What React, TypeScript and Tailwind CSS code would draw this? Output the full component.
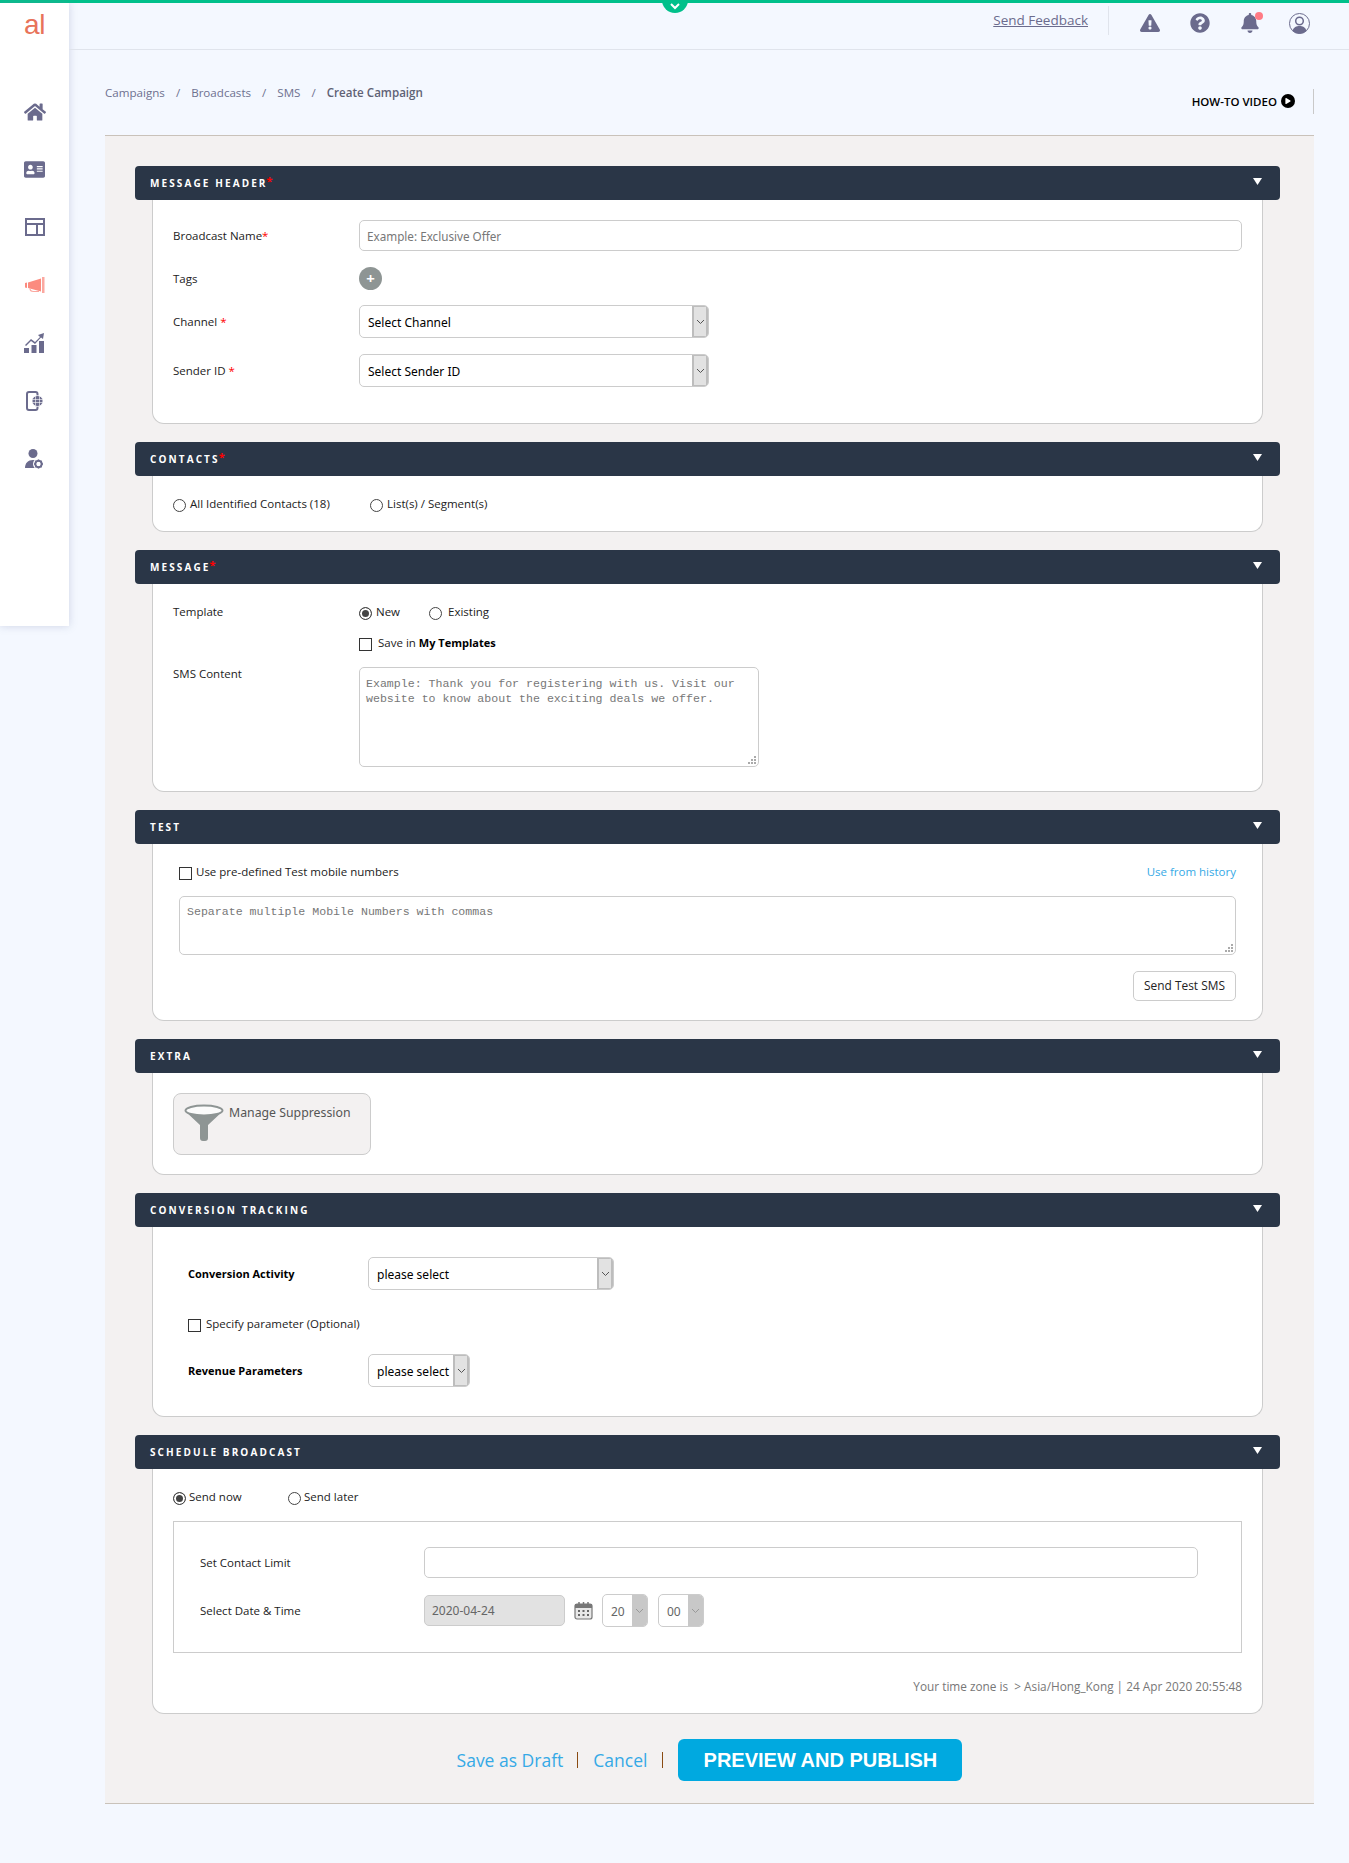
import React from 'react';
import { FaHome, FaAddressCard, FaExclamationTriangle, FaQuestionCircle, FaBell, FaPlay } from 'react-icons/fa';

const NUN = 'font-["Open_Sans","Noto_Sans",sans-serif]';
const TAH = 'font-["Noto_Sans",sans-serif]';
const MONO = "font-['Liberation_Mono',monospace]";

function Chevron({ color = '#555' }: { color?: string }) {
  return (
    <svg width="9" height="6" viewBox="0 0 9 6" fill="none">
      <path d="M1 1l3.5 3.5L8 1" stroke={color} strokeWidth="1" />
    </svg>
  );
}

function Section({ title, req, children }: { title: string; req?: boolean; children: React.ReactNode }) {
  return (
    <div className="mb-[18px]">
      <div className="h-[34px] rounded-[4px] bg-[#2a3647] flex items-center justify-between pl-[15px] pr-[18px]">
        <div className="text-[10px] font-bold tracking-[2.1px] text-white leading-none mb-[1px]">
          {title}
          {req && <span className="text-[#ff0000] text-[11px] tracking-normal relative -top-[2px] -left-[1px]">*</span>}
        </div>
        <svg width="9" height="7" viewBox="0 0 9 7" className="mb-[4px]"><path d="M0 0h9L4.500 7z" fill="#fff" /></svg>
      </div>
      <div className="mx-[17px] bg-white border-x border-b border-[#ccc] rounded-b-[12px]">{children}</div>
    </div>
  );
}

function Select({ text, w, grey }: { text: string; w: string; grey?: boolean }) {
  return (
    <div className={`${w} h-[33px] shrink-0 flex rounded-[5px] border border-[#ccc] bg-white overflow-hidden`}>
      <div className={`flex-1 pl-[8px] pt-[2px] flex items-center text-[12px] whitespace-nowrap ${TAH} ${grey ? 'text-[#666]' : 'text-black'}`}>{text}</div>
      <div className={`${grey ? 'w-[15px] bg-[#c8c8c8]' : 'w-[16px] bg-[#e2e2e2] border-x-2 border-y border-[#bdbdbd]'} flex items-center justify-center`}>
        <Chevron color={grey ? '#999' : '#555'} />
      </div>
    </div>
  );
}

function Radio({ checked, name }: { checked?: boolean; name: string }) {
  return (
    <input
      type="radio"
      name={name}
      defaultChecked={checked}
      className="appearance-none w-[13px] h-[13px] mt-[3px] shrink-0 rounded-full border border-[#444] bg-white checked:bg-[#444] checked:shadow-[inset_0_0_0_2px_#fff]"
    />
  );
}

function Check() {
  return <input type="checkbox" className="appearance-none w-[13px] h-[13px] mt-[3px] shrink-0 border border-[#333] bg-white" />;
}

function Label({ children, className = '' }: { children: React.ReactNode; className?: string }) {
  return <div className={`text-[11.5px] leading-[17px] text-[#222] ${className}`}>{children}</div>;
}

function Grip() {
  return (
    <svg width="8" height="8" viewBox="0 0 8 8" fill="#aaa" className="absolute right-[3px] bottom-[3px]">
      <path d="M6 0h2v2H6zM3 3h2v2H3zM6 3h2v2H6zM0 6h2v2H0zM3 6h2v2H3zM6 6h2v2H6z" />
    </svg>
  );
}

const Star = () => <span className="text-[#ff0000]">*</span>;

function LayoutIcon() {
  return (
    <svg width="20" height="18" viewBox="0 0 20 18" fill="#6b6b8d">
      <path fillRule="evenodd" d="M0 0h20v18H0zM2 2v3h16V2zM2 7v9h9V7zM13 7v9h5V7z" />
    </svg>
  );
}

function ChartIcon() {
  return (
    <svg width="21" height="20" viewBox="0 0 21 20" fill="#6b6b8d">
      <rect x="0" y="15" width="5" height="5" />
      <rect x="7.500" y="12" width="5" height="8" />
      <rect x="15" y="8" width="5" height="12" />
      <path d="M1 12l6-6 4 3 5-5-2-2 6-2-1 6-2-1.500-6 6.500-4-3-5 5z" />
    </svg>
  );
}

function Megaphone() {
  return (
    <svg width="20" height="16" viewBox="0 0 20 16">
      <path d="M0 6l2-.500V11L0 10.500z" fill="#fb8b7f" />
      <path d="M3 5.500L16 1.500v13L3 11z" fill="#fb8b7f" />
      <rect x="17" y="0" width="2.500" height="16" fill="#fba8a0" />
      <path d="M5 11.500c0 3 2 3 3.500 3H14" fill="none" stroke="#fba8a0" strokeWidth="1.200" />
    </svg>
  );
}

function MobileIcon() {
  return (
    <svg width="17" height="20" viewBox="0 0 17 20">
      <rect x="1" y="1" width="10.500" height="18" rx="2" fill="none" stroke="#6b6b8d" strokeWidth="2" />
      <circle cx="11.500" cy="10" r="5.500" fill="#6b6b8d" stroke="#fff" strokeWidth="0.800" />
      <path d="M6.500 8.500h10M6.500 11.500h10M9.500 5v10M13.500 5v10" stroke="#fff" strokeWidth="0.600" />
    </svg>
  );
}

function UserGear() {
  return (
    <svg width="19" height="20" viewBox="0 0 19 20">
      <circle cx="8" cy="4.500" r="4.500" fill="#6b6b8d" />
      <path d="M0 19c0-5 3-8 8-8s8 3 8 8z" fill="#6b6b8d" />
      <circle cx="13.500" cy="15" r="5.500" fill="#fff" />
      <circle cx="13.500" cy="15" r="3.200" fill="none" stroke="#6b6b8d" strokeWidth="2" />
      <path d="M13.500 10.500v2M13.500 17.500v2M9 15h2M16 15h2M10.300 11.800l1.400 1.400M15.300 16.800l1.400 1.400M16.700 11.800l-1.400 1.400M11.700 16.800l-1.400 1.400" stroke="#6b6b8d" strokeWidth="1.300" />
    </svg>
  );
}

function UserCircle() {
  return (
    <svg width="21" height="21" viewBox="0 0 21 21">
      <circle cx="10.500" cy="10.500" r="10" fill="none" stroke="#6b6b8d" strokeWidth="1" />
      <circle cx="10.500" cy="8" r="3.800" fill="none" stroke="#6b6b8d" strokeWidth="1.500" />
      <path d="M3.500 18c1-4 4-5 7-5s6 1 7 5a10 10 0 0 1-14 0z" fill="#6b6b8d" />
    </svg>
  );
}

function Funnel() {
  return (
    <svg width="40" height="37" viewBox="0 0 40 37">
      <path d="M1 7l15 14v13a3 3 0 0 0 3 3h2a3 3 0 0 0 3-3V21L39 7z" fill="#8e9594" />
      <ellipse cx="20" cy="6.500" rx="18.500" ry="5" fill="#fbfbfb" stroke="#8e9594" strokeWidth="2" />
    </svg>
  );
}

function CalendarIcon() {
  return (
    <svg width="19" height="19" viewBox="0 0 19 19" className="shrink-0">
      <rect x="1" y="3" width="17" height="15" rx="2" fill="#e8e8e8" stroke="#777" strokeWidth="1.200" />
      <rect x="1" y="3" width="17" height="4" fill="#777" />
      <path d="M5 1v4M9.500 1v4M14 1v4" stroke="#777" strokeWidth="1.500" />
      <path d="M4 9h2v2H4zM8.500 9h2v2h-2zM13 9h2v2h-2zM4 13h2v2H4zM8.500 13h2v2h-2zM13 13h2v2h-2z" fill="#666" />
    </svg>
  );
}

export default function App() {
  return (
    <div className={`min-h-[1863px] bg-[#f4f8ff] relative ${NUN}`}>
      <div className="h-[3px] bg-[#00c08b]" />
      <div className="absolute left-[662px] top-0 w-[26px] h-[13px] rounded-b-[13px] bg-[#00c08b] flex items-center justify-center">
        <svg width="10" height="7" viewBox="0 0 10 7" fill="none"><path d="M1 1l4 4 4-4" stroke="#fff" strokeWidth="2" /></svg>
      </div>
      <div className="flex items-start">
        <aside className="w-[69px] h-[623px] shrink-0 bg-white shadow-[0_0_8px_rgba(120,130,170,0.3)] flex flex-col items-center">
          <div className="h-[46px] mt-[4px] text-[28px] leading-[36px] font-['Liberation_Sans',sans-serif] tracking-[-0.5px] text-[#e8735a]">al</div>
          <div className="mt-[48px] flex flex-col items-center">
            <div className="h-[58px] flex items-start"><FaHome size={22} color="#6b6b8d" /></div>
            <div className="h-[58px] flex items-start"><FaAddressCard size={21} color="#6b6b8d" /></div>
            <div className="h-[58px] flex items-start pt-[1px]"><LayoutIcon /></div>
            <div className="h-[58px] flex items-start pt-[2px]"><Megaphone /></div>
            <div className="h-[58px] flex items-start"><ChartIcon /></div>
            <div className="h-[58px] flex items-start"><MobileIcon /></div>
            <div className="h-[58px] flex items-start"><UserGear /></div>
          </div>
        </aside>

        <main className="flex-1 min-w-0">
          <header className="h-[47px] border-b border-[#e0e4ec] flex items-center justify-end pr-[25px]">
            <a className="text-[13.5px] text-[#6b6b8d] underline mb-[12px]">Send Feedback</a>
            <div className="w-px h-[29px] bg-[#e0e4ec] ml-[20px] mr-[16px] mb-[12px]" />
            <div className="flex items-center mb-[6px]">
              <span className="w-[50px] flex justify-center"><FaExclamationTriangle size={20} color="#6b6b8d" /></span>
              <span className="w-[50px] flex justify-center"><FaQuestionCircle size={20} color="#6b6b8d" /></span>
              <span className="w-[49px] flex justify-center">
                <span className="relative">
                  <FaBell size={20} color="#6b6b8d" />
                  <span className="absolute -top-[1px] right-[-3px] w-[8px] h-[8px] rounded-full bg-[#ff7b85]" />
                </span>
              </span>
              <span className="w-[50px] flex justify-center"><UserCircle /></span>
            </div>
          </header>

          <div className="pl-[36px] pr-[35px]">
            <div className="h-[85px] relative">
              <div className="pt-[34px] text-[11.6px] text-[#6e7190] flex">
                <span>Campaigns</span><span className="mx-[11px]">/</span>
                <span>Broadcasts</span><span className="mx-[11px]">/</span>
                <span>SMS</span><span className="mx-[11px]">/</span>
                <span className="font-semibold text-[#5f6275]">Create Campaign</span>
              </div>
              <div className="absolute right-0 top-[39px] h-[25px] border-r border-[#c9c9c9] pr-[18px] flex items-center gap-[4px]">
                <span className="text-[11.5px] font-semibold text-black">HOW-TO VIDEO</span>
                <span className="w-[14px] h-[14px] rounded-full bg-black flex items-center justify-center mb-[1px]"><FaPlay size={6} color="#fff" /></span>
              </div>
            </div>

            <div className="bg-[#f3f1f1] border-y border-[#c9c2ba] pl-[30px] pr-[34px] pt-[30px] pb-[22px] w-[1209px]">
              <Section title="MESSAGE HEADER" req>
                <div className="pl-[20px] pr-[20px] pt-[20px] pb-[36px]">
                  <div className="flex items-center">
                    <Label className="w-[186px]">Broadcast Name<Star /></Label>
                    <input placeholder="Example: Exclusive Offer" className={`flex-1 h-[31px] rounded-[5px] border border-[#ccc] px-[7px] text-[11.7px] placeholder:text-[#777] ${TAH}`} />
                  </div>
                  <div className="flex items-center mt-[16px]">
                    <Label className="w-[186px]">Tags</Label>
                    <span className="w-[23px] h-[23px] rounded-full bg-[#8e9594] text-white flex items-center justify-center text-[15px] font-bold leading-none">+</span>
                  </div>
                  <div className="flex items-center mt-[15px]">
                    <Label className="w-[186px]">Channel <Star /></Label>
                    <Select text="Select Channel" w="w-[350px]" />
                  </div>
                  <div className="flex items-center mt-[16px]">
                    <Label className="w-[186px]">Sender ID <Star /></Label>
                    <Select text="Select Sender ID" w="w-[350px]" />
                  </div>
                </div>
              </Section>

              <Section title="CONTACTS" req>
                <div className="pl-[20px] h-[55px] pt-[19px] flex items-start">
                  <label className="flex items-center gap-[4px] w-[197px]"><Radio name="contacts" /><Label>All Identified Contacts (18)</Label></label>
                  <label className="flex items-center gap-[4px]"><Radio name="contacts" /><Label>List(s) / Segment(s)</Label></label>
                </div>
              </Section>

              <Section title="MESSAGE" req>
                <div className="pl-[20px] pt-[19px] h-[207px]">
                  <div className="flex items-center">
                    <Label className="w-[186px]">Template</Label>
                    <label className="flex items-center gap-[4px] w-[70px]"><Radio name="tpl" checked /><Label>New</Label></label>
                    <label className="flex items-center gap-[6px]"><Radio name="tpl" /><Label>Existing</Label></label>
                  </div>
                  <div className="flex items-center ml-[186px] mt-[14px] gap-[6px]">
                    <Check /><Label>Save in <b className="text-black text-[11px] font-bold">My Templates</b></Label>
                  </div>
                  <div className="flex mt-[16px]">
                    <Label className="w-[186px] -mt-[2px]">SMS Content</Label>
                    <div className="relative">
                      <textarea placeholder="Example: Thank you for registering with us. Visit our website to know about the exciting deals we offer." className={`block w-[400px] h-[100px] resize-none rounded-[5px] border border-[#ccc] px-[6px] py-[8px] text-[11.6px] leading-[15px] placeholder:text-[#777] ${MONO}`} />
                      <Grip />
                    </div>
                  </div>
                </div>
              </Section>

              <Section title="TEST">
                <div className="pl-[26px] pr-[26px] pt-[19px] h-[176px]">
                  <div className="flex items-center justify-between">
                    <label className="flex items-center gap-[4px]"><Check /><Label>Use pre-defined Test mobile numbers</Label></label>
                    <a className="text-[11.5px] text-[#35a9e6]">Use from history</a>
                  </div>
                  <div className="relative mt-[16px]">
                    <textarea placeholder="Separate multiple Mobile Numbers with commas" className={`block w-full h-[59px] resize-none rounded-[5px] border border-[#ccc] px-[7px] py-[8px] text-[11.6px] leading-[14px] placeholder:text-[#777] ${MONO}`} />
                    <Grip />
                  </div>
                  <div className="flex justify-end mt-[16px]">
                    <button className="h-[30px] w-[103px] rounded-[5px] border border-[#ccc] bg-white text-[11.9px] text-[#222]">Send Test SMS</button>
                  </div>
                </div>
              </Section>

              <Section title="EXTRA">
                <div className="pl-[20px] pt-[20px] h-[101px]">
                  <div className="w-[198px] h-[62px] rounded-[8px] border border-[#ccc] bg-[#f3f1f1] pl-[10px] pt-[10px] flex items-start gap-[5px]">
                    <Funnel />
                    <span className={`text-[12.3px] leading-[18px] text-[#555] ${TAH}`}>Manage Suppression</span>
                  </div>
                </div>
              </Section>

              <Section title="CONVERSION TRACKING">
                <div className="pl-[35px] pt-[30px] h-[189px]">
                  <div className="flex items-center">
                    <Label className="w-[180px] !text-[11px] font-bold !text-black">Conversion Activity</Label>
                    <Select text="please select" w="w-[246px]" />
                  </div>
                  <label className="flex items-center gap-[5px] mt-[25px]"><Check /><Label>Specify parameter (Optional)</Label></label>
                  <div className="flex items-center mt-[22px]">
                    <Label className="w-[180px] !text-[11px] font-bold !text-black">Revenue Parameters</Label>
                    <Select text="please select" w="w-[102px]" />
                  </div>
                </div>
              </Section>

              <Section title="SCHEDULE BROADCAST">
                <div className="px-[20px] pt-[19px] h-[244px]">
                  <div className="flex items-center">
                    <label className="flex items-center gap-[3px] w-[115px]"><Radio name="when" checked /><Label>Send now</Label></label>
                    <label className="flex items-center gap-[3px]"><Radio name="when" /><Label>Send later</Label></label>
                  </div>
                  <div className="mt-[16px] h-[132px] border border-[#ccc] pl-[26px] pr-[43px] pt-[25px]">
                    <div className="flex items-center">
                      <Label className="w-[224px]">Set Contact Limit</Label>
                      <input className="flex-1 h-[31px] rounded-[5px] border border-[#ccc]" />
                    </div>
                    <div className="flex items-center mt-[16px]">
                      <Label className="w-[224px]">Select Date &amp; Time</Label>
                      <input readOnly value="2020-04-24" className={`w-[141px] h-[31px] rounded-[5px] border border-[#ccc] bg-[#e2e2e2] px-[7px] text-[12px] text-[#666] ${TAH}`} />
                      <span className="ml-[9px] mr-[9px]"><CalendarIcon /></span>
                      <Select text="20" w="w-[46px]" grey />
                      <span className="w-[10px]" />
                      <Select text="00" w="w-[46px]" grey />
                    </div>
                  </div>
                  <div className="text-right text-[11.8px] leading-[17px] text-[#777] mt-[25px]">Your time zone is &nbsp;&gt; Asia/Hong_Kong | 24 Apr 2020 20:55:48</div>
                </div>
              </Section>

              <div className="flex items-center justify-center ml-[4px] mt-[25px] text-[17.5px] text-[#35a9e6]">
                <a>Save as Draft</a>
                <span className="ml-[14px] mr-[15px] w-px h-[16px] bg-[#8a4b12]" />
                <a>Cancel</a>
                <span className="mx-[15px] w-px h-[16px] bg-[#8a4b12]" />
                <button className="w-[284px] h-[42px] rounded-[6px] bg-[#00a9e0] text-white text-[20px] font-bold font-['Liberation_Sans',sans-serif]">PREVIEW AND PUBLISH</button>
              </div>
            </div>
          </div>
        </main>
      </div>
    </div>
  );
}
